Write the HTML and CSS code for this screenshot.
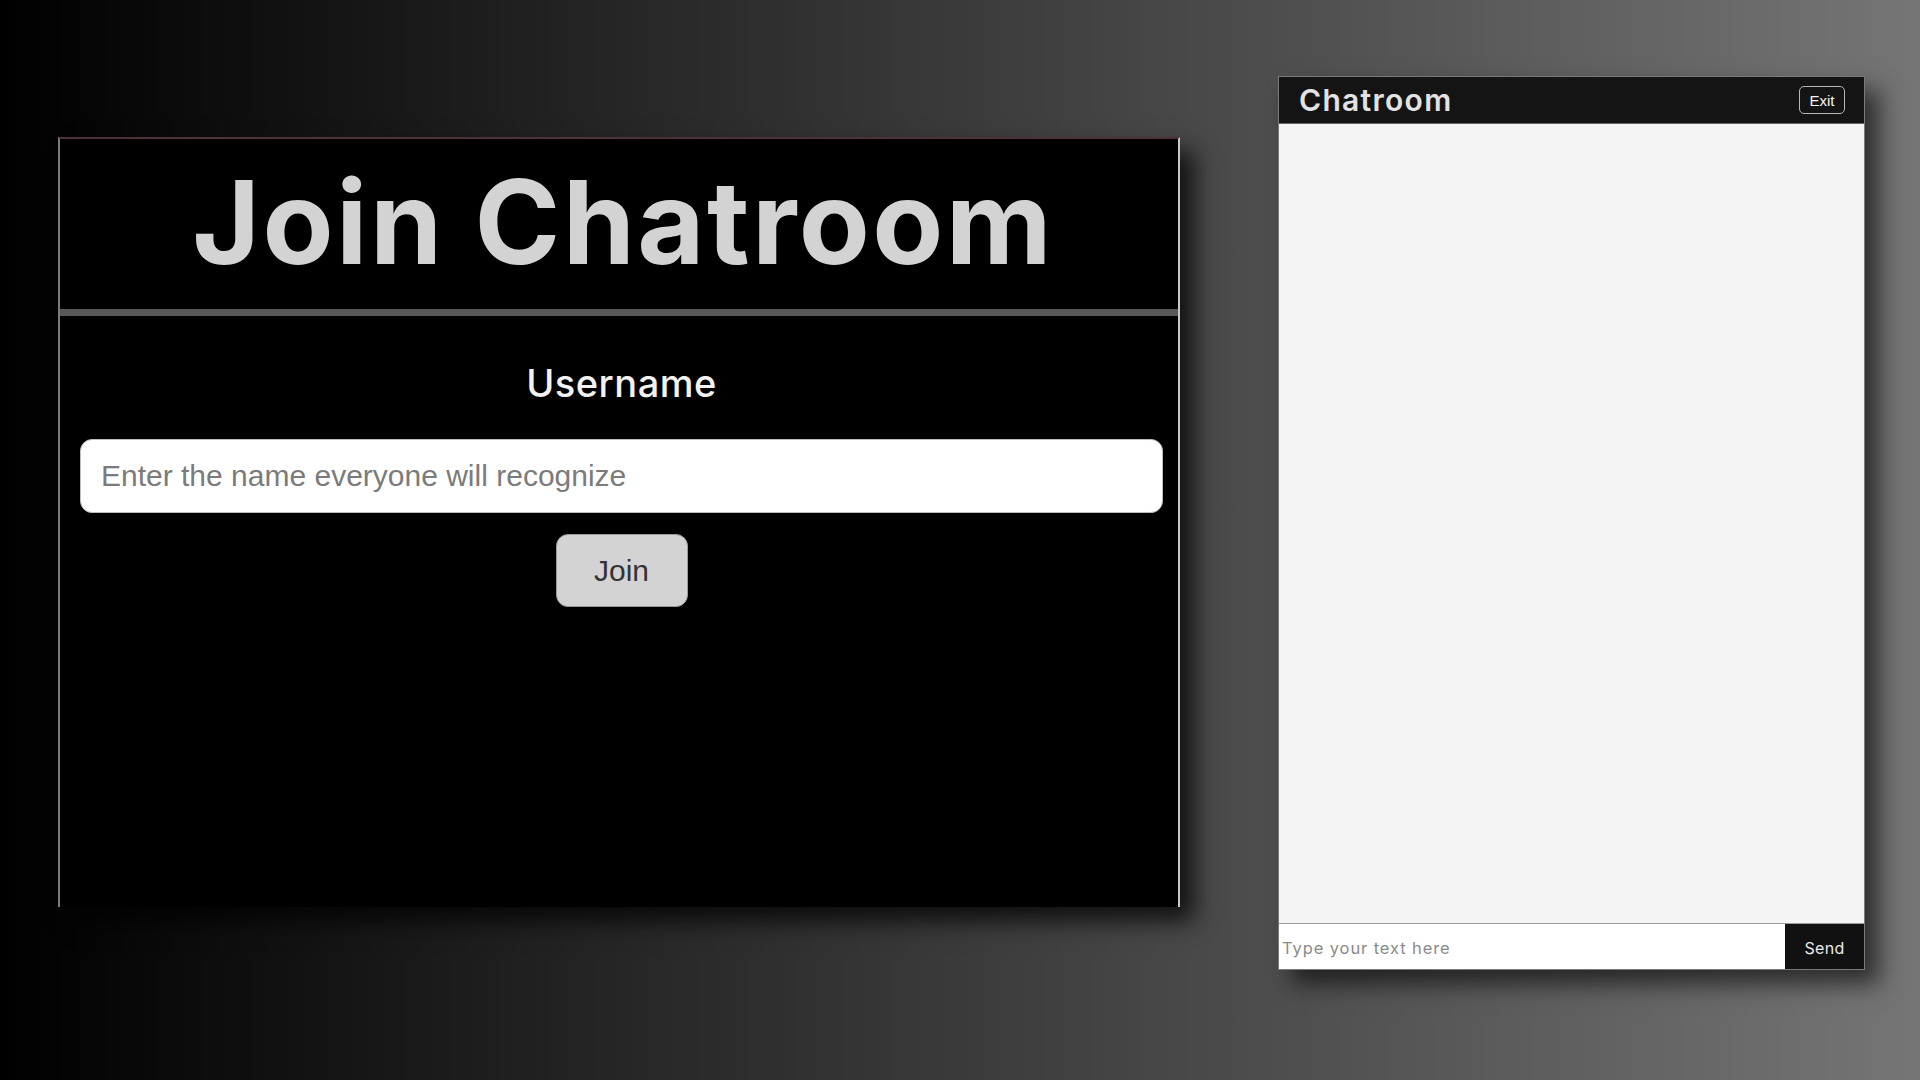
FILE: index.html
```html
<!DOCTYPE html>
<html lang="en">
<head>
<meta charset="utf-8">
<title>Chatroom</title>
<link rel="stylesheet" href="styles.css">
</head>
<body>
<main class="stage">
  <section class="join-panel">
    <header class="join-header">
      <h1 class="join-title">Join Chatroom</h1>
    </header>
    <div class="join-form">
      <label class="join-label" for="username">Username</label>
      <input id="username" class="join-input" type="text" placeholder="Enter the name everyone will recognize">
      <button class="join-button" type="button">Join</button>
    </div>
  </section>

  <section class="chat-panel">
    <header class="chat-header">
      <h2 class="chat-title">Chatroom</h2>
      <button class="exit-button" type="button">Exit</button>
    </header>
    <div class="chat-body"></div>
    <footer class="chat-footer">
      <input class="chat-input" type="text" placeholder="Type your text here">
      <button class="send-button" type="button">Send</button>
    </footer>
  </section>
</main>
</body>
</html>
```
FILE: styles.css
```css
* { box-sizing: border-box; }

html, body {
  margin: 0;
  padding: 0;
  width: 1920px;
  height: 1080px;
  overflow: hidden;
}

body {
  background: linear-gradient(to right, #000000, #757575);
  font-family: "Inter", "Liberation Sans", sans-serif;
}

.stage {
  display: flex;
  align-items: flex-start;
  padding: 76px 0 0 58px;
  gap: 98px;
}

/* ---------- Join panel ---------- */
.join-panel {
  margin-top: 61px;
  width: 1122px;
  height: 770px;
  background: #000;
  border-top: 2px solid #4d3338;
  border-left: 2px solid #7a7a7a;
  border-right: 2px solid #c8c8c8;
  box-shadow: 14px 14px 22px rgba(0, 0, 0, 0.75);
  display: flex;
  flex-direction: column;
}

.join-header {
  height: 177px;
  border-bottom: 7px solid #585858;
  display: flex;
  justify-content: center;
  align-items: center;
  padding: 0 0 4px 6px;
}

.join-title {
  margin: 0 -2.4px 0 0;
  font-family: "Inter", sans-serif;
  font-weight: 700;
  font-size: 116px;
  letter-spacing: 2.4px;
  color: #d3d3d3;
  line-height: 1;
}

.join-form {
  display: flex;
  flex-direction: column;
  align-items: center;
  padding: 44px 15px 0 20px;
}

.join-label {
  font-family: "Inter", sans-serif;
  font-weight: 500;
  font-size: 38px;
  letter-spacing: 0.5px;
  color: #f2f2f2;
  line-height: 46px;
  margin-bottom: 33px;
}

.join-input {
  width: 1083px;
  height: 74px;
  border: 1px solid #bdbdbd;
  border-radius: 12px;
  background: #fff;
  padding: 0 20px;
  font-family: "Liberation Sans", Arial, sans-serif;
  font-size: 30px;
  color: #333;
  outline: none;
}

.join-input::placeholder { color: #7b7b7b; }

.join-button {
  margin-top: 21px;
  width: 132px;
  height: 73px;
  border: 1px solid #9a9a9a;
  border-radius: 12px;
  background: #d3d3d3;
  font-family: "Liberation Sans", Arial, sans-serif;
  font-size: 30px;
  color: #333;
  padding: 0;
}

/* ---------- Chat panel ---------- */
.chat-panel {
  width: 587px;
  height: 894px;
  border: 1px solid #7a7a7a;
  background: #f4f4f4;
  box-shadow: 14px 14px 22px rgba(0, 0, 0, 0.6);
  display: flex;
  flex-direction: column;
}

.chat-header {
  height: 47px;
  background: #141414;
  border-bottom: 1px solid #666;
  display: flex;
  align-items: center;
  justify-content: space-between;
  padding: 0 19px 0 20px;
}

.chat-title {
  margin: 0;
  font-family: "Inter", sans-serif;
  font-weight: 600;
  font-size: 30px;
  letter-spacing: 1.3px;
  color: #e2e2e2;
  line-height: 1;
}

.exit-button {
  width: 46px;
  height: 28px;
  border: 1px solid #b5b5b5;
  border-radius: 5px;
  background: transparent;
  color: #f5f5f5;
  font-family: "Liberation Sans", Arial, sans-serif;
  font-size: 15px;
  padding: 0;
}

.chat-body {
  flex: 1;
  background: #f4f4f4;
}

.chat-footer {
  height: 46px;
  display: flex;
  border-top: 1px solid #9a9a9a;
}

.chat-input {
  flex: 1;
  border: none;
  background: #fff;
  padding: 3px 3px 0;
  font-family: "Inter", sans-serif;
  font-size: 16.5px;
  letter-spacing: 0.9px;
  color: #333;
  outline: none;
}

.chat-input::placeholder { color: #8a8a8a; }

.send-button {
  width: 79px;
  border: none;
  background: #111;
  color: #eaeaea;
  font-family: "Inter", sans-serif;
  font-size: 16px;
  letter-spacing: 0.3px;
  padding: 3px 0 0;
}
```
